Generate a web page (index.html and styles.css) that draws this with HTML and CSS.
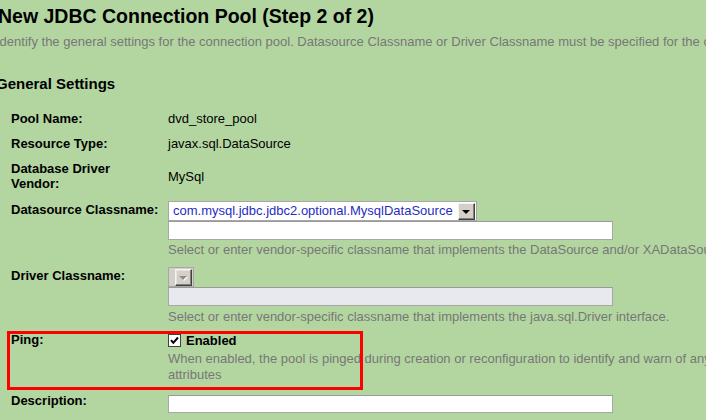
FILE: index.html
```
<!DOCTYPE html>
<html>
<head>
<meta charset="utf-8">
<title>New JDBC Connection Pool (Step 2 of 2)</title>
<link rel="stylesheet" href="styles.css">
</head>
<body>
<main class="page">
  <h1 class="title">New JDBC Connection Pool (Step 2 of 2)</h1>
  <p class="intro">Identify the general settings for the connection pool. Datasource Classname or Driver Classname must be specified for the connection pool.</p>
  <h2 class="section">General Settings</h2>
  <div class="form">
    <div class="label">Pool Name:</div>
    <div class="value">dvd_store_pool</div>

    <div class="label">Resource Type:</div>
    <div class="value">javax.sql.DataSource</div>

    <div class="label">Database Driver<br>Vendor:</div>
    <div class="value middle">MySql</div>

    <div class="label with-combo">Datasource Classname:</div>
    <div class="value">
      <div class="combo">
        <span class="combo-text">com.mysql.jdbc.jdbc2.optional.MysqlDataSource</span>
        <span class="combo-btn"><span class="arrow"></span></span>
      </div>
      <div class="input"></div>
      <div class="help">Select or enter vendor-specific classname that implements the DataSource and/or XADataSource APIs.</div>
    </div>

    <div class="label with-combo">Driver Classname:</div>
    <div class="value">
      <div class="combo combo-disabled">
        <span class="combo-btn"><span class="arrow"></span></span>
      </div>
      <div class="input input-disabled"></div>
      <div class="help help-2">Select or enter vendor-specific classname that implements the java.sql.Driver interface.</div>
    </div>

    <div class="label ping">Ping:</div>
    <div class="value ping">
      <div class="check-line">
        <svg class="checkbox" width="13" height="13" viewBox="0 0 13 13" aria-hidden="true">
          <rect x="0.5" y="0.5" width="12" height="12" fill="#fff" stroke="#404040"/>
          <path d="M3 6.2 L5.3 8.8 L10 3.5" fill="none" stroke="#000" stroke-width="2"/>
        </svg>
        <span class="check-label">Enabled</span>
      </div>
      <div class="help help-ping">When enabled, the pool is pinged during creation or reconfiguration to identify and warn of any erroneous values for its<br>attributes</div>
    </div>

    <div class="label desc">Description:</div>
    <div class="value desc">
      <div class="input"></div>
    </div>
  </div>
  <div class="callout"></div>
</main>
</body>
</html>
```
FILE: styles.css
```
html, body {
  margin: 0;
  padding: 0;
  overflow: hidden;
  background: #b3d6a0;
}

body {
  width: 706px;
  height: 420px;
  font-family: "Liberation Sans", Arial, sans-serif;
  font-size: 13px;
  line-height: 15px;
  color: #000;
}

.page {
  position: relative;
  box-sizing: border-box;
  height: 420px;
  padding-top: 4px;
}

.title {
  margin: 0 0 0 -2px;
  font-size: 19.5px;
  line-height: 24px;
  font-weight: bold;
  white-space: nowrap;
}

.intro {
  margin: 6px 0 0 -4px;
  color: #777;
  white-space: nowrap;
}

.section {
  margin: 26px 0 0 -4px;
  font-size: 15px;
  line-height: 18px;
  font-weight: bold;
}

.form {
  margin-top: 18px;
  padding-left: 11px;
  display: grid;
  grid-template-columns: 157px max-content;
  row-gap: 10px;
}

.label {
  font-weight: bold;
  white-space: nowrap;
}

.label.with-combo {
  padding-top: 1px;
}

.value {
  white-space: nowrap;
}

.value.middle {
  align-self: center;
}

.combo {
  display: flex;
  align-items: center;
  box-sizing: border-box;
  width: 309px;
  height: 20px;
  border: 1px solid #a7a7a7;
  background: #fff;
}

.combo-text {
  flex: 1;
  padding-left: 4px;
  color: #1f2dbf;
  line-height: 18px;
}

.combo-btn {
  position: relative;
  box-sizing: border-box;
  width: 17px;
  height: 17px;
  margin-right: 1px;
  background: #d4d0c8;
  border-style: solid;
  border-width: 1px;
  border-color: #f4f4f4 #404040 #404040 #f4f4f4;
  box-shadow: inset -1px -1px #808080;
  display: flex;
  align-items: center;
  justify-content: center;
}

.arrow {
  width: 0;
  height: 0;
  border-left: 4px solid transparent;
  border-right: 4px solid transparent;
  border-top: 4px solid #000;
  margin: 1px 1px 0 0;
}

.combo-disabled {
  width: 26px;
  height: 20px;
  justify-content: flex-end;
  background: #d4d0c8;
}

.combo-disabled .combo-btn {
  box-shadow: inset -1px -1px #808080, inset 1px 1px #e6e3de;
}

.combo-disabled .arrow {
  border-top-color: #8a8a8a;
  filter: drop-shadow(1px 1px 0 #fff);
}

.input {
  box-sizing: border-box;
  width: 445px;
  height: 19px;
  border: 1px solid #a7a7a7;
  border-top-color: #9a9a9a;
  background: #fff;
}

.input-disabled {
  background: #e8e9ee;
}

.help {
  margin-top: 2px;
  color: #777;
}

.help-2 {
  margin-top: 3px;
}

.ping {
  margin-top: -2px;
}

.check-line {
  display: flex;
  align-items: center;
  gap: 5px;
  padding-top: 1px;
}

.checkbox {
  display: block;
  flex: none;
}

.check-label {
  font-weight: bold;
}

.help-ping {
  margin-top: 3px;
  line-height: 16px;
}

.desc .input {
  height: 18px;
  margin-top: 2px;
}

.callout {
  position: absolute;
  left: 7px;
  top: 331px;
  width: 356px;
  height: 59px;
  box-sizing: border-box;
  border: 3px solid #f00;
  pointer-events: none;
}
```
